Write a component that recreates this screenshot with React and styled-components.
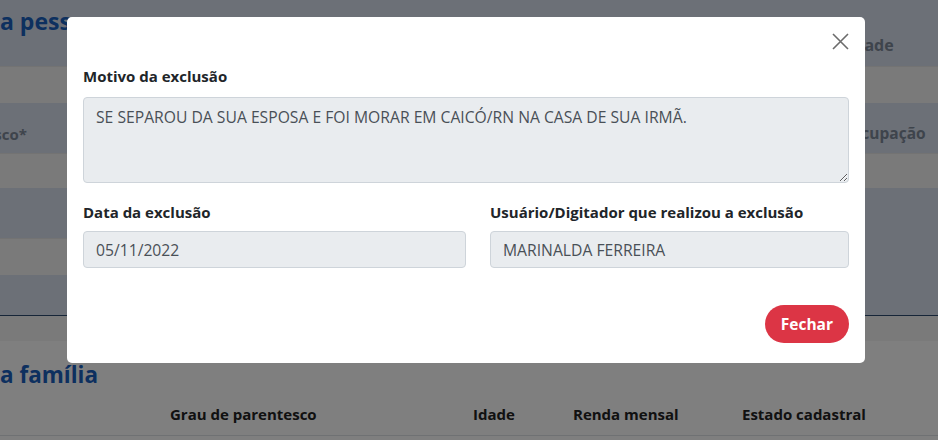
import React from "react";
import styled, { createGlobalStyle } from "styled-components";

const Global = createGlobalStyle`
  html, body { margin: 0; padding: 0; }
  body {
    font-family: "Open Sans", "Noto Sans", Arial, sans-serif;
    font-size: 15px;
    color: #212529;
    background: #ffffff;
    overflow: hidden;
  }
  * { box-sizing: border-box; }
`;

const Page = styled.div`
  width: 938px;
  height: 440px;
  position: relative;
  overflow: hidden;
  background: #ffffff;
`;

const Card = styled.section`
  display: grid;
  grid-template-columns: 1fr 1fr;
  background: #d8e0ee;
  border-bottom: 1px solid #2c4a70;
`;

const Column = styled.div`
  display: flex;
  flex-direction: column;
`;

const LabelBlock = styled.div`
  height: ${(p) => p.$h}px;
  display: flex;
  align-items: flex-end;
  padding-bottom: ${(p) => p.$pb || 9}px;
`;

const Title = styled.h2`
  margin: 0;
  align-self: flex-start;
  font-size: 23px;
  font-weight: 700;
  color: #1a60bf;
  line-height: 1;
  padding-top: 10px;
  height: 66px;
`;

const FieldLabel = styled.span`
  font-weight: 700;
  font-size: ${(p) => p.$size || 16}px;
  color: #7d8898;
  white-space: nowrap;
  margin-left: ${(p) => p.$offset || 0}px;
`;

const ClipLabel = styled.span`
  width: ${(p) => p.$w}px;
  display: flex;
  justify-content: flex-end;
  overflow: hidden;
  white-space: nowrap;
  font-weight: 700;
  font-size: 15px;
  color: #7d8898;
`;

const FakeInput = styled.div`
  height: ${(p) => p.$h}px;
  background: ${(p) => (p.$empty ? "transparent" : "#f4f4f4")};
  border-top: 1px solid ${(p) => (p.$empty ? "transparent" : "#e6e6e6")};
`;

const Strip = styled.div`
  height: 25px;
  background: #f4f4f4;
`;

const Section = styled.section`
  padding-top: 16px;
`;

const SectionTitle = styled.h2`
  margin: 0;
  font-size: 22.5px;
  font-weight: 700;
  color: #1a60bf;
  line-height: 36px;
`;

const TableHead = styled.div`
  display: grid;
  grid-template-columns: 170px 303px 100px 169px 193px;
  align-items: center;
  height: 43px;
  border-bottom: 1px solid #dee2e6;
  width: 1100px;
`;

const Th = styled.span`
  font-weight: 700;
  font-size: 15px;
  color: #222;
  white-space: nowrap;
`;

const Overlay = styled.div`
  position: fixed;
  inset: 0;
  background: rgba(0, 0, 0, 0.5);
`;

const Modal = styled.div`
  position: fixed;
  left: 67px;
  top: 17px;
  width: 798px;
  background: #fff;
  border-radius: 5px;
  padding: 16px 16px 20px;
  display: flex;
  flex-direction: column;
`;

const ModalHeader = styled.div`
  display: flex;
  justify-content: flex-end;
  height: 32px;
`;

const CloseButton = styled.button`
  width: 17px;
  height: 17px;
  padding: 0;
  border: 0;
  background: transparent;
  display: flex;
  cursor: pointer;
`;

const Label = styled.label`
  display: block;
  font-weight: 700;
  font-size: 15px;
  line-height: 22px;
  color: #212529;
  margin-bottom: ${(p) => p.$mb || 8}px;
`;

const TextArea = styled.textarea`
  display: block;
  width: 100%;
  height: 86px;
  padding: 8px 12px;
  font-family: inherit;
  font-size: 15.7px;
  line-height: 22px;
  color: #495057;
  background: #e9ecef;
  border: 1px solid #ced4da;
  border-radius: 4px;
  outline: none;
  margin: 0 0 18px;
`;

const Row = styled.div`
  display: grid;
  grid-template-columns: 383px 1fr;
  column-gap: 24px;
`;

const Input = styled.input`
  display: block;
  width: 100%;
  height: 37px;
  padding: 0 12px;
  font-family: inherit;
  font-size: 15.7px;
  color: #495057;
  background: #e9ecef;
  border: 1px solid #ced4da;
  border-radius: 4px;
  outline: none;
`;

const Footer = styled.div`
  display: flex;
  justify-content: flex-end;
  padding-top: 37px;
`;

const DangerButton = styled.button`
  height: 38px;
  padding: 0 16px;
  border: 0;
  border-radius: 19px;
  background: #dc3545;
  color: #fff;
  font-family: inherit;
  font-weight: 700;
  font-size: 15.5px;
  cursor: pointer;
`;

const XIcon = () => (
  <svg width="17" height="17" viewBox="0 0 17 17" fill="none">
    <path d="M1 1L16 16M16 1L1 16" stroke="#6c6c6c" strokeWidth="1.6" />
  </svg>
);

export default function App() {
  return (
    <>
      <Global />
      <Page>
        <Card>
          <Column>
            <Title>a pessoa</Title>
            <FakeInput $h={37} />
            <LabelBlock $h={50}>
              <ClipLabel $w={27}>Grau de parentesco*</ClipLabel>
            </LabelBlock>
            <FakeInput $h={35} />
            <LabelBlock $h={50} />
            <FakeInput $h={37} />
            <LabelBlock $h={40} />
          </Column>
          <Column>
            <LabelBlock $h={66} $pb={10}>
              <FieldLabel $offset={380}>Idade</FieldLabel>
            </LabelBlock>
            <FakeInput $h={37} />
            <LabelBlock $h={50}>
              <FieldLabel $offset={380} $size={15.5}>Ocupação</FieldLabel>
            </LabelBlock>
            <FakeInput $h={35} />
            <LabelBlock $h={50} />
            <FakeInput $h={37} $empty />
            <LabelBlock $h={40} />
          </Column>
        </Card>
        <Strip />
        <Section>
          <SectionTitle>a família</SectionTitle>
          <TableHead>
            <span />
            <Th>Grau de parentesco</Th>
            <Th>Idade</Th>
            <Th>Renda mensal</Th>
            <Th>Estado cadastral</Th>
          </TableHead>
        </Section>
        <Overlay />
        <Modal role="dialog">
          <ModalHeader>
            <CloseButton aria-label="Fechar">
              <XIcon />
            </CloseButton>
          </ModalHeader>
          <Label $mb={10}>Motivo da exclusão</Label>
          <TextArea
            readOnly
            value="SE SEPAROU DA SUA ESPOSA E FOI MORAR EM CAICÓ/RN NA CASA DE SUA IRMÃ."
          />
          <Row>
            <div>
              <Label>Data da exclusão</Label>
              <Input readOnly value="05/11/2022" />
            </div>
            <div>
              <Label>Usuário/Digitador que realizou a exclusão</Label>
              <Input readOnly value="MARINALDA FERREIRA" />
            </div>
          </Row>
          <Footer>
            <DangerButton>Fechar</DangerButton>
          </Footer>
        </Modal>
      </Page>
    </>
  );
}
